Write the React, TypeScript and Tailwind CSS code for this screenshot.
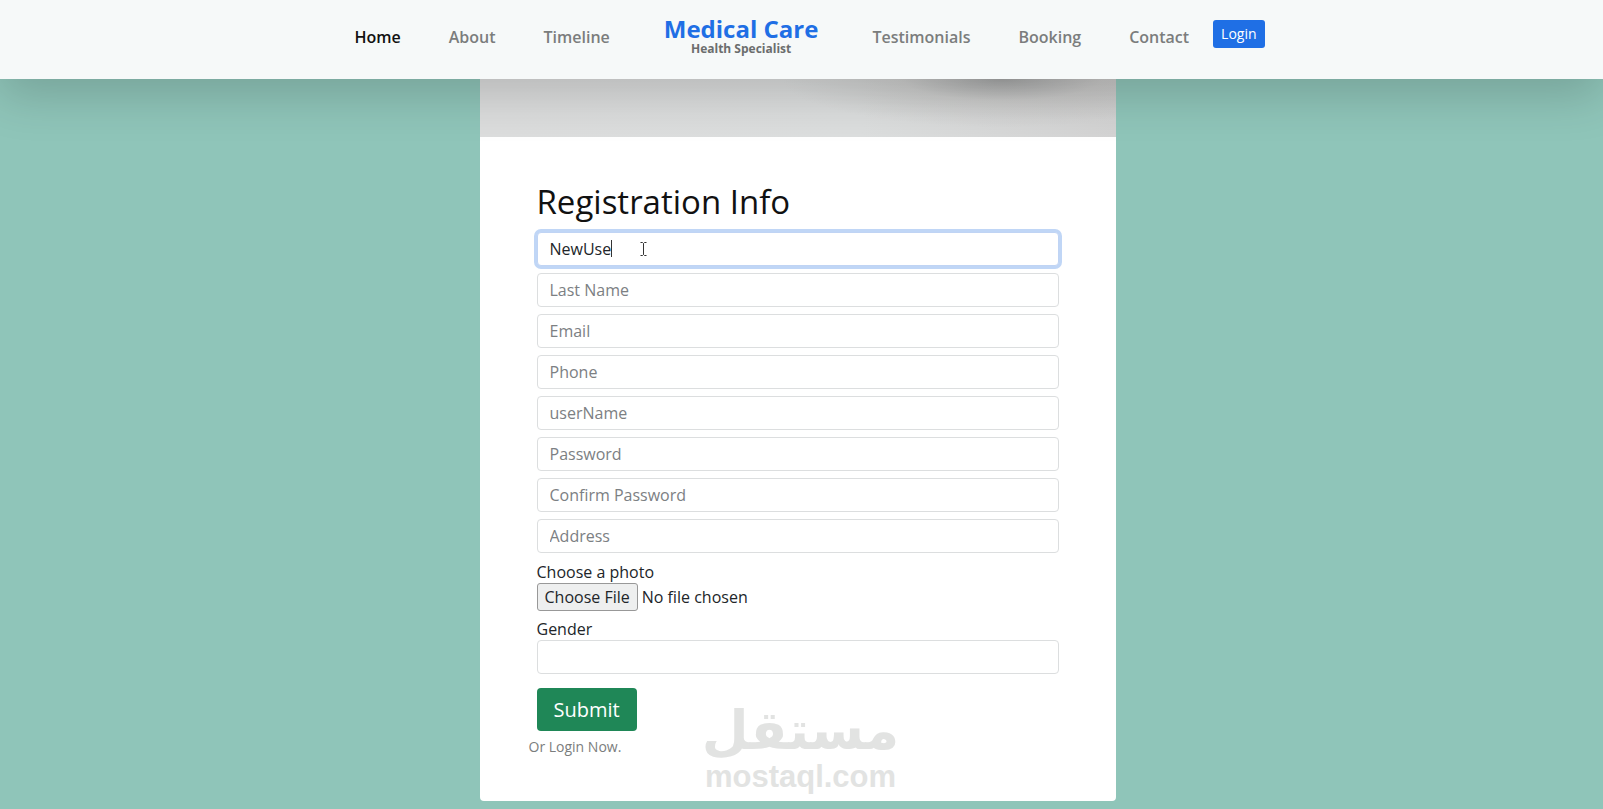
// Registration page
import { useState } from 'react';

const leftLinks = ['Home', 'About', 'Timeline'];
const rightLinks = ['Testimonials', 'Booking', 'Contact'];

const fields = [
  { name: 'lastName', label: 'Last Name', type: 'text' },
  { name: 'email', label: 'Email', type: 'email' },
  { name: 'phone', label: 'Phone', type: 'tel' },
  { name: 'userName', label: 'userName', type: 'text' },
  { name: 'password', label: 'Password', type: 'password' },
  { name: 'confirmPassword', label: 'Confirm Password', type: 'password' },
  { name: 'address', label: 'Address', type: 'text' },
];

const control =
  'block w-full h-[34px] px-3 rounded border border-[#dcdedf] bg-white text-base text-[#212529] placeholder:text-[#7c8083] outline-none';

function NavLink({ label }: { label: string }) {
  return (
    <a
      href={`#${label.toLowerCase()}`}
      className={label === 'Home' ? 'text-[#111111]' : 'text-[#7b7d7d]'}
    >
      {label}
    </a>
  );
}

function Header() {
  return (
    <header className="relative z-10 flex h-[79px] justify-center bg-[#f6f9f9] pl-4 shadow-[0_16px_48px_rgba(0,0,0,0.175)]">
      <nav className="flex items-center gap-6 pb-1.5 text-base font-semibold">
        <div className="flex items-center gap-[54px]">
          <div className="flex gap-12">
            {leftLinks.map((label) => <NavLink key={label} label={label} />)}
          </div>
          <a href="#home" className="flex flex-col items-center">
            <span className="text-2xl leading-6 font-bold text-[#1f6fe5]">Medical Care</span>
            <span className="text-xs leading-4 font-bold text-[#6b6d6d]">Health Specialist</span>
          </a>
          <div className="flex gap-12">
            {rightLinks.map((label) => <NavLink key={label} label={label} />)}
          </div>
        </div>
        <button type="button" className="mb-1.5 h-7 rounded-[3px] bg-[#1f6fe5] px-2 text-sm font-normal text-white">
          Login
        </button>
      </nav>
    </header>
  );
}

export default function App() {
  const [firstName, setFirstName] = useState('NewUse');

  return (
    <div className="min-h-screen bg-[#8fc5b9] font-['Open_Sans',sans-serif] text-[#212529]">
      <Header />

      <main className="flex justify-center pr-2 pb-2">
        <div className="relative w-full max-w-[636px] rounded-b bg-white">
          {/* bottom edge of the cover photo */}
          <div className="h-[58px] bg-[radial-gradient(ellipse_220px_48px_at_82%_0,rgba(90,92,92,0.4),rgba(150,148,144,0.2)_45%,transparent),linear-gradient(to_right,#dcdddd,#dcdede_60%,#d3d3d3)]" />

          <form className="px-[57px] pt-11 pb-[42px]" onSubmit={(e) => e.preventDefault()}>
            <h1 className="mb-[9px] text-[33px] leading-[42px] font-medium text-[#111111]">Registration Info</h1>

            <div className="flex flex-col gap-[7px]">
              <div className="relative">
                <input
                  type="text"
                  name="firstName"
                  aria-label="First Name"
                  value={firstName}
                  onChange={(e) => setFirstName(e.target.value)}
                  className="block h-[34px] w-full rounded border border-[#c0d4f4] bg-white px-3 text-base text-[#212529] ring-3 ring-[#c0d6f6] outline-none"
                />
                {/* text caret and pointer */}
                <svg className="pointer-events-none absolute top-2 left-[72px]" width="42" height="18" viewBox="0 0 42 18" fill="none" stroke="#333333" aria-hidden="true">
                  <path d="M2.500 0v17" />
                  <path d="M31.5 2.5h2l1 1 1-1h2M34.5 3.5v11M31.5 15.500h2l1-1 1 1h2" />
                </svg>
              </div>
              {fields.map((f) => (
                <input key={f.name} type={f.type} name={f.name} placeholder={f.label} aria-label={f.label} className={control} />
              ))}
            </div>

            <div className="mt-2">
              <label htmlFor="photo" className="block text-base leading-[22px]">Choose a photo</label>
              <input
                id="photo"
                type="file"
                className="block h-7 w-full text-base file:mr-1 file:h-7 file:rounded-[3px] file:border file:border-solid file:border-[#989898] file:bg-[#eeefef] file:px-[7px] file:text-[#212529]"
              />
            </div>

            <div className="mt-[7px]">
              <label htmlFor="gender" className="block text-base leading-[22px]">Gender</label>
              <select id="gender" defaultValue="" className={`${control} appearance-none`}>
                <option value="" />
                <option value="male">Male</option>
                <option value="female">Female</option>
              </select>
            </div>

            <button type="submit" className="mt-[14px] block h-[43px] rounded bg-[#1f8757] px-[17px] text-xl text-white">
              Submit
            </button>
            <p className="-ml-2 mt-1 text-sm leading-6 text-[#7b7d7d]">
              Or <a href="#login">Login Now.</a>
            </p>
          </form>

          {/* watermark */}
          <div className="pointer-events-none absolute inset-x-0 bottom-2 flex flex-col items-center pl-1.5 font-bold text-[#e2e3e2]">
            <span lang="ar" dir="rtl" className="font-['DejaVu_Sans',sans-serif] text-[54px] leading-[60px]">مستقل</span>
            <span className="font-['Liberation_Sans',sans-serif] text-[31px] leading-8">mostaql.com</span>
          </div>
        </div>
      </main>
    </div>
  );
}
